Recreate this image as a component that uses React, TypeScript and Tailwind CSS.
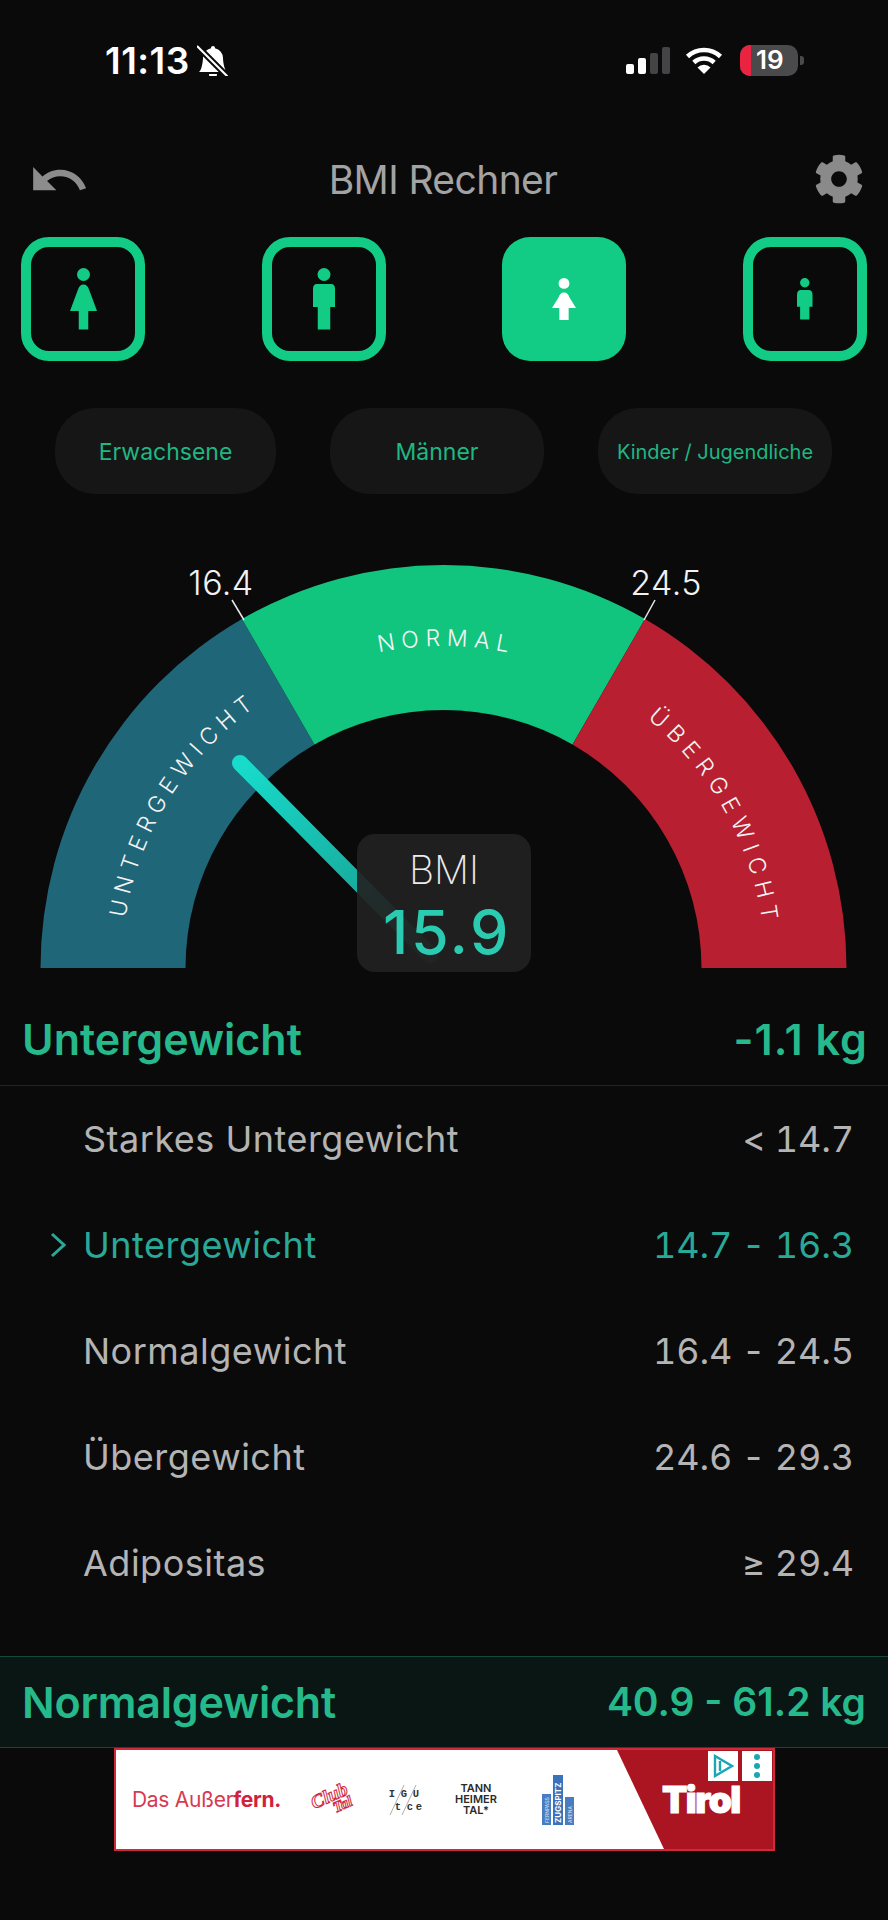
import { BsBellSlashFill } from "react-icons/bs";
import { FaCog } from "react-icons/fa";
import { MdUndo } from "react-icons/md";

const CX = 443.5;
const CY = 474;
const pt = (r: number, deg: number) => {
  const a = (deg * Math.PI) / 180;
  return `${(CX + r * Math.sin(a)).toFixed(2)} ${(CY - r * Math.cos(a)).toFixed(2)}`;
};
const sector = (a: number, b: number, ro = 403, ri = 258) =>
  `M${pt(ro, a)} A${ro} ${ro} 0 0 1 ${pt(ro, b)} L${pt(ri, b)} A${ri} ${ri} 0 0 0 ${pt(ri, a)} Z`;
const arc = (a: number, b: number, r: number) => `M${pt(r, a)} A${r} ${r} 0 0 1 ${pt(r, b)}`;

type PersonProps = {
  kind: "woman" | "man";
  w: number;
  h: number;
  head: number;
  top: number;
  bottom: number;
  leg: number;
  color: string;
};

function Person({ kind, w, h, head, top, bottom, leg, color }: PersonProps) {
  const c = w / 2;
  const l = c - leg / 2;
  const r = c + leg / 2;
  const d =
    kind === "woman"
      ? `M${c} ${top} C${c - 3} ${top} ${c - 4.5} ${top + 2} ${c - 5.5} ${top + 5} L0 ${bottom} H${l} V${h} H${r} V${bottom} H${w} L${c + 5.5} ${top + 5} C${c + 4.5} ${top + 2} ${c + 3} ${top} ${c} ${top}Z`
      : `M4 ${top} H${w - 4} Q${w} ${top} ${w} ${top + 5} V${bottom} H${r} V${h} H${l} V${bottom} H0 V${top + 5} Q0 ${top} 4 ${top}Z`;
  return (
    <svg width={w} height={h} viewBox={`0 0 ${w} ${h}`} fill={color}>
      <circle cx={c} cy={head} r={head} />
      <path d={d} />
    </svg>
  );
}

function Wifi() {
  return (
    <svg width="38" height="28" viewBox="0 0 38 28" fill="none" stroke="#fff" strokeWidth="4.6">
      <path d="M2.5 10.5 A24 24 0 0 1 35.5 10.5" />
      <path d="M8.8 16.5 A15 15 0 0 1 29.2 16.5" />
      <path d="M19 28 L12.5 21.5 A9 9 0 0 1 25.5 21.5 Z" fill="#fff" stroke="none" />
    </svg>
  );
}

const sexes = [
  { active: false, p: { kind: "woman", w: 27, h: 61.5, head: 6.5, top: 16.5, bottom: 43, leg: 9.5 } },
  { active: false, p: { kind: "man", w: 22, h: 61.5, head: 6.5, top: 16, bottom: 39, leg: 12.5 } },
  { active: true, p: { kind: "woman", w: 24, h: 42, head: 5.4, top: 14.4, bottom: 30, leg: 9.3 } },
  { active: false, p: { kind: "man", w: 15.5, h: 41.5, head: 4.7, top: 12, bottom: 28.7, leg: 9.3 } },
] as const;

const rows = [
  { name: "Starkes Untergewicht", value: "< 14.7" },
  { name: "Untergewicht", value: "14.7 - 16.3", on: true },
  { name: "Normalgewicht", value: "16.4 - 24.5" },
  { name: "Übergewicht", value: "24.6 - 29.3" },
  { name: "Adipositas", value: "≥ 29.4" },
];

export default function App() {
  return (
    <div className="w-[888px] h-[1920px] overflow-hidden bg-[#0a0a0b] font-[Inter,sans-serif] flex flex-col">
      {/* status bar */}
      <div className="h-[120px] flex items-center shrink-0">
        <span className="ml-[105px] text-[37px] font-semibold text-white tracking-[0.5px] leading-none">11:13</span>
        <BsBellSlashFill className="ml-[7px] text-white -scale-x-100" size={32} />
        <div className="ml-auto mr-[84px] flex items-center">
          <div className="flex items-end gap-[4px] h-[27px]">
            <div className="w-[8px] h-[10px] rounded-[2px] bg-white" />
            <div className="w-[8px] h-[16px] rounded-[2px] bg-white" />
            <div className="w-[8px] h-[21px] rounded-[2px] bg-[#444446]" />
            <div className="w-[8px] h-[27px] rounded-[2px] bg-[#444446]" />
          </div>
          <div className="ml-[15px]">
            <Wifi />
          </div>
          <div className="ml-[17px] flex items-center">
            <div className="w-[58px] h-[31px] rounded-[10px] overflow-hidden bg-[#4a4a4c] flex items-center">
              <div className="w-[11px] h-full bg-[#ea2440] shrink-0" />
              <span className="ml-[5px] text-[26px] leading-none font-semibold text-white">19</span>
            </div>
            <div className="ml-[2px] w-[4px] h-[9px] rounded-r-[3px] bg-[#4a4a4c]" />
          </div>
        </div>
      </div>

      {/* header */}
      <div className="h-[117px] shrink-0 flex items-center justify-between pl-[28px] pr-[24px]">
        <MdUndo size={62} className="text-[#8c8c8c] mt-[3px]" />
        <span className="text-[39px] text-[#a3a3a3] tracking-[-0.6px] mt-[4px] mr-[18px]">BMI Rechner</span>
        <FaCog size={50} className="text-[#8a8a8a]" />
      </div>

      {/* sex selector */}
      <div className="flex justify-between px-[21px] shrink-0">
        {sexes.map((s, i) => (
          <div
            key={i}
            className={
              s.active
                ? "w-[124px] h-[124px] rounded-[28px] bg-[#12cc85] flex items-center justify-center"
                : "w-[124px] h-[124px] rounded-[28px] border-[10px] border-[#12cc85] flex items-center justify-center"
            }
          >
            <Person {...s.p} color={s.active ? "#ffffff" : "#12cc85"} />
          </div>
        ))}
      </div>

      {/* category pills */}
      <div className="mt-[47px] pl-[55px] flex gap-[54px] shrink-0">
        <div className="w-[221px] h-[86px] pt-[2px] rounded-[40px] bg-[#161616] flex items-center justify-center text-[23px] text-[#1fb783]">
          Erwachsene
        </div>
        <div className="w-[214px] h-[86px] pt-[2px] rounded-[40px] bg-[#161616] flex items-center justify-center text-[23px] text-[#1fb783]">
          Männer
        </div>
        <div className="w-[234px] h-[86px] pt-[2px] rounded-[40px] bg-[#161616] flex items-center justify-center text-[20px] text-[#1fb783]">
          Kinder / Jugendliche
        </div>
      </div>

      {/* gauge */}
      <div className="relative h-[482px] shrink-0">
        <svg width="888" height="482" viewBox="0 0 888 482" className="block">
          <defs>
            <linearGradient id="needle" x1="240" y1="269" x2="433" y2="464" gradientUnits="userSpaceOnUse">
              <stop offset="0" stopColor="#18dccb" />
              <stop offset="0.7" stopColor="#17a89b" />
              <stop offset="1" stopColor="#169d92" stopOpacity="0.4" />
            </linearGradient>
            <path id="arcU" d={arc(-98, -18, 322)} />
            <path id="arcN" d={arc(-29.5, 30.5, 322)} />
            <path id="arcO" d={arc(21, 101, 322)} />
          </defs>
          <path d={sector(-90, -30)} fill="#206679" />
          <path d={sector(-30, 30)} fill="#11c57f" />
          <path d={sector(30, 90)} fill="#b81f30" />
          <line x1="232" y1="106" x2="244" y2="126" stroke="#e8e8e8" strokeWidth="1.5" />
          <line x1="655" y1="106" x2="644" y2="126" stroke="#e8e8e8" strokeWidth="1.5" />
          <text x="221" y="101" textAnchor="middle" fontSize="34" fontWeight="300" fill="#f2f2f2" letterSpacing="0.4">
            16.4
          </text>
          <text x="666" y="101" textAnchor="middle" fontSize="34" fontWeight="300" fill="#f2f2f2" letterSpacing="0.4">
            24.5
          </text>
          <g fontSize="23" fontWeight="350" fill="#f4f4f4" letterSpacing="6.2" textAnchor="middle">
            <text>
              <textPath href="#arcU" startOffset="50%">
                UNTERGEWICHT
              </textPath>
            </text>
            <text>
              <textPath href="#arcN" startOffset="50%">
                NORMAL
              </textPath>
            </text>
            <text letterSpacing="7">
              <textPath href="#arcO" startOffset="50%">
                ÜBERGEWICHT
              </textPath>
            </text>
          </g>
          <line x1="240" y1="269" x2="430" y2="461" stroke="url(#needle)" strokeWidth="16" strokeLinecap="round" />
        </svg>
        <div className="absolute left-[357px] top-[340px] w-[174px] h-[138px] rounded-[18px] bg-[#222222]/92 flex flex-col items-center">
          <span className="mt-[14px] text-[39px] leading-[44px] font-extralight text-[#ececec]">BMI</span>
          <span className="mt-[6px] pl-[6px] text-[61px] leading-[68px] font-medium text-[#2bcbb2] tracking-[2.5px]">15.9</span>
        </div>
      </div>

      {/* result */}
      <div className="h-[110px] shrink-0 pt-[18px] pl-[22px] pr-[20px] flex items-center justify-between border-b border-[#232323] text-[#25b98c] text-[43px] font-semibold">
        <span>Untergewicht</span>
        <span className="tracking-[1px]">-1.1 kg</span>
      </div>

      {/* table */}
      <div className="flex flex-col shrink-0">
        {rows.map((r) => (
          <div
            key={r.name}
            className={
              r.on
                ? "h-[106px] pl-[83px] pr-[34px] relative flex items-center justify-between text-[36px] text-[#2aa898]"
                : "h-[106px] pl-[83px] pr-[34px] relative flex items-center justify-between text-[36px] text-[#b4b4b4]"
            }
          >
            {r.on && (
              <svg
                width="16"
                height="26"
                viewBox="0 0 16 26"
                fill="none"
                stroke="#2aa898"
                strokeWidth="3"
                className="absolute left-[50px] top-[40px]"
              >
                <path d="M2 2 L14 13 L2 24" />
              </svg>
            )}
            <span className="tracking-[0.5px]">{r.name}</span>
            <span className="tabular-nums tracking-[-0.1px]">{r.value}</span>
          </div>
        ))}
      </div>

      {/* target band */}
      <div className="mt-[40px] h-[92px] shrink-0 px-[22px] flex items-center justify-between bg-[#0a1613] border-y border-[#14493b] text-[#25b98c] font-semibold">
        <span className="text-[43px] tracking-[-0.2px]">Normalgewicht</span>
        <span className="text-[39px]">40.9 - 61.2 kg</span>
      </div>

      {/* ad */}
      <div className="ml-[114px] w-[661px] h-[103px] shrink-0 relative bg-white border-2 border-[#cf2a3c] flex items-center overflow-hidden">
        <svg width="657" height="99" viewBox="0 0 657 99" className="absolute left-0 top-0">
          <polygon points="501,0 657,0 657,99 548,99" fill="#ab1421" />
        </svg>
        <span className="relative ml-[16px] text-[21px] text-[#d63a52] tracking-[-0.3px] whitespace-nowrap">
          Das Außer<b className="font-bold text-[#d1213c]">fern.</b>
        </span>
        <svg width="38" height="32" viewBox="0 0 38 32" className="relative ml-[30px] overflow-visible">
          <g
            fontFamily="Liberation Serif, serif"
            fontStyle="italic"
            fontWeight="700"
            fill="#fff"
            stroke="#cf2a3c"
            strokeWidth="1"
            transform="rotate(-24 19 16)"
          >
            <text x="1" y="18" fontSize="19">Club</text>
            <text x="19" y="30" fontSize="15">Tal</text>
          </g>
        </svg>
        <svg width="36" height="30" viewBox="0 0 36 30" className="relative ml-[38px]" fill="#333">
          <g fontSize="10.5" fontFamily="Liberation Mono, monospace" fontWeight="700" textAnchor="middle">
            <text x="5" y="12">I</text>
            <text x="17" y="12">G</text>
            <text x="29" y="12">U</text>
            <text x="11" y="25">t</text>
            <text x="23" y="25">c</text>
            <text x="32" y="25">e</text>
          </g>
          <line x1="17" y1="0" x2="3" y2="30" stroke="#999" strokeWidth="0.8" />
          <line x1="29" y1="0" x2="15" y2="30" stroke="#999" strokeWidth="0.8" />
        </svg>
        <div className="relative ml-[30px] w-[46px] flex flex-col items-center text-[11px] leading-[11px] font-semibold text-[#2a2a2a]">
          <span>TANN</span>
          <span>HEIMER</span>
          <span>TAL*</span>
        </div>
        <svg width="32" height="50" viewBox="0 0 32 50" className="relative ml-[43px]">
          <rect x="0" y="19" width="9" height="31" fill="#4a7cc0" />
          <rect x="11" y="0" width="10" height="50" fill="#3a72bb" />
          <rect x="23" y="22" width="9" height="28" fill="#4a7cc0" />
          <text transform="translate(19 48) rotate(-90)" fontSize="8" fontWeight="700" fill="#fff">
            ZUGSPITZ
          </text>
          <text transform="translate(7 48) rotate(-90)" fontSize="5" fill="#dbe6f5">
            FERNPASS
          </text>
          <text transform="translate(30 48) rotate(-90)" fontSize="5" fill="#dbe6f5">
            ARENA
          </text>
        </svg>
        <span className="relative ml-[88px] text-[37px] leading-none font-black text-white tracking-[-1.5px] [-webkit-text-stroke:1px_white]">
          Tirol
        </span>
        <div className="absolute top-[1px] right-[1px] flex gap-[4px]">
          <div className="w-[30px] h-[30px] bg-white flex items-center justify-center">
            <svg width="22" height="24" viewBox="0 0 22 24" fill="none" stroke="#1aa6b4" strokeWidth="2.4">
              <path d="M3 2 L20 12 L3 22 Z M8 7 L8 17" />
            </svg>
          </div>
          <div className="w-[30px] h-[30px] bg-white flex flex-col items-center justify-center gap-[3px]">
            <div className="w-[6px] h-[6px] rounded-full bg-[#1aa6b4]" />
            <div className="w-[6px] h-[6px] rounded-full bg-[#1aa6b4]" />
            <div className="w-[6px] h-[6px] rounded-full bg-[#1aa6b4]" />
          </div>
        </div>
      </div>
    </div>
  );
}
